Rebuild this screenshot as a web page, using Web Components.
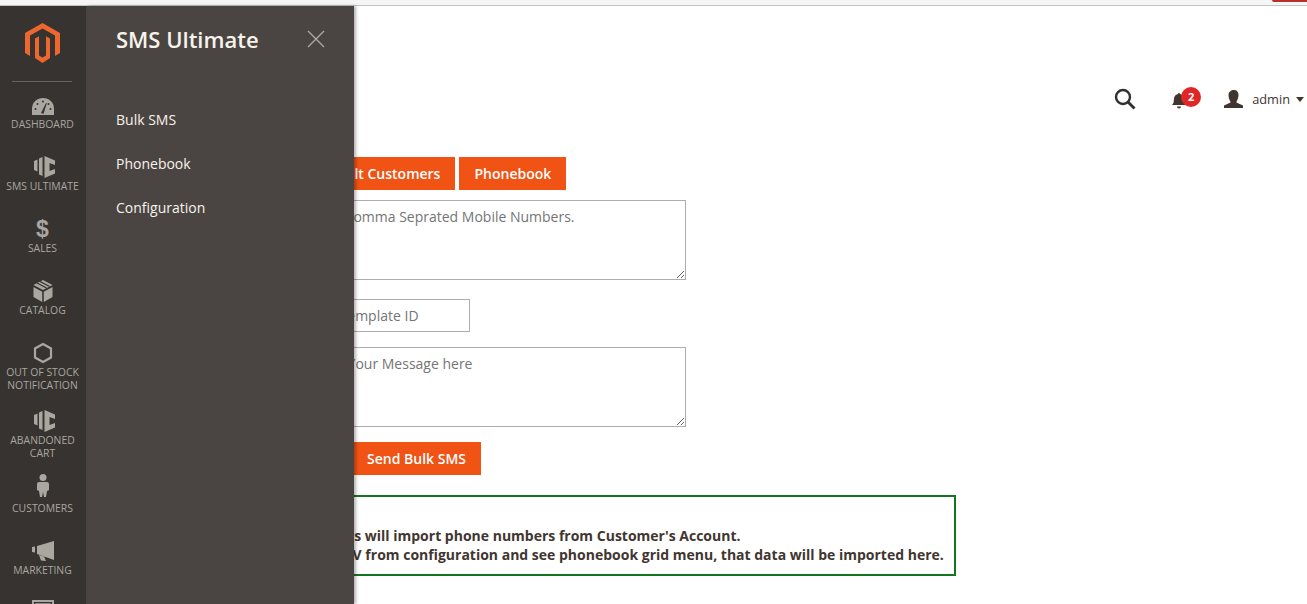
<!DOCTYPE html>
<html>
<head>
<meta charset="utf-8">
<title>SMS Ultimate</title>
<style>
  html, body { margin: 0; height: 100%; overflow: hidden; background: #fff; }
  body { font-family: "Open Sans", "Noto Sans", sans-serif; font-size: 14px; color: #41362f; }
</style>
</head>
<body>
<app-shell>
  <admin-sidebar slot="sidebar">
    <nav-item label="Dashboard">
      <svg viewBox="0 0 30 30" width="30" height="30">
        <path d="M4 27v-6C4 14 9 10 15 10s11 4 11 11v6z" fill="#aaa6a0"/>
        <path d="M13 25l5-10 .8.4-3.4 10.6z" fill="#373330"/>
        <g fill="#373330"><circle cx="7.5" cy="21" r="1"/><circle cx="9.5" cy="16" r="1"/><circle cx="15" cy="13.5" r="1"/><circle cx="20.5" cy="16" r="1"/><circle cx="22.5" cy="21" r="1"/></g>
      </svg>
    </nav-item>
    <nav-item label="SMS Ultimate">
      <svg viewBox="0 0 30 30" width="30" height="30">
        <path d="M6 11l3.500-1.500v12L6 20zM11 8.500l3.500-1.500v19L11 24.500zM16.500 6L27 10.500V15l-5.500-2v8l5.500-2v4.500L16.500 28z" fill="#aaa6a0"/>
      </svg>
    </nav-item>
    <nav-item label="Sales"><span class="glyph" slot="glyph">$</span></nav-item>
    <nav-item label="Catalog">
      <svg viewBox="0 0 30 30" width="30" height="30" fill="#aaa6a0">
        <path d="M15 6l9.5 5-9.500 5-9.500-5z"/>
        <path d="M9 9l9.500 5M12 7.500l9.500 5" stroke="#373330" stroke-width="1.3" fill="none"/>
        <path d="M5.500 13l8.700 4.700V28l-8.700-5zM24.500 13l-8.700 4.700V28l8.700-5z"/>
      </svg>
    </nav-item>
    <nav-item label="Out of Stock Notification" class="two">
      <svg viewBox="0 0 30 30" width="30" height="30">
        <path d="M15 8l8 4.500v9l-8 4.500-8-4.500v-9z" fill="none" stroke="#aaa6a0" stroke-width="2.2"/>
      </svg>
    </nav-item>
    <nav-item label="Abandoned Cart" class="two">
      <svg viewBox="0 0 30 30" width="30" height="30">
        <path d="M6 11l3.500-1.500v12L6 20zM11 8.500l3.500-1.500v19L11 24.500zM16.500 6L27 10.500V15l-5.500-2v8l5.500-2v4.500L16.500 28z" fill="#aaa6a0"/>
      </svg>
    </nav-item>
    <nav-item label="Customers">
      <svg viewBox="0 0 30 30" width="30" height="30" fill="#aaa6a0">
        <circle cx="15" cy="5.500" r="3.500"/>
        <path d="M11 10h8q2 0 2 2v6l-2 1-1 6h-2l-1-5-1 5h-2l-1-6-2-1v-6q0-2 2-2z"/>
      </svg>
    </nav-item>
    <nav-item label="Marketing">
      <svg viewBox="0 0 30 30" width="30" height="30" fill="#aaa6a0">
        <path d="M4 13l3-.5v6l-3-.5zM9 12l17-5v19l-17-6z"/>
        <path d="M11 21l5 1.500 2 4.500-5-.5z"/>
      </svg>
    </nav-item>
    <nav-item>
      <svg viewBox="0 0 30 30" width="30" height="30">
        <rect x="5" y="5" width="20" height="20" fill="none" stroke="#aaa6a0" stroke-width="2"/>
        <rect x="8" y="8" width="14" height="6" fill="none" stroke="#aaa6a0" stroke-width="1.5"/>
      </svg>
    </nav-item>
  </admin-sidebar>
  <slide-panel slot="panel" heading="SMS Ultimate">
    <a href="#">Bulk SMS</a>
    <a href="#">Phonebook</a>
    <a href="#">Configuration</a>
  </slide-panel>
  <top-actions slot="main"></top-actions>
  <bulk-sms-form slot="main"></bulk-sms-form>
  <note-box slot="main">
    <div>Customers will import phone numbers from Customer's Account.</div>
    <div style="margin-left: -2px">Import CSV from configuration and see phonebook grid menu, that data will be imported here.</div>
  </note-box>
</app-shell>

<script>
// top strip + sidebar + main column, the slide panel lies over the main column
customElements.define(
  "app-shell",
  class AppShell extends HTMLElement {
    constructor() {
      super();
      const template = document.createElement("template");
      template.innerHTML = `
        <style>
          :host { display: block; position: relative; height: 604px; overflow: hidden; }
          .strip { height: 5px; background: #f6f6f6; border-bottom: 1px solid #c4c4c4; position: relative; }
          .strip i { position: absolute; right: 0; top: 0; width: 35px; height: 1.5px; background: #b8312f; border-radius: 0 0 0 3px; }
          .row { display: flex; height: 598px; }
          .main { flex: 1; min-width: 0; padding-left: 214px; }
          .over { position: absolute; left: 86px; top: 6px; bottom: 0; }
        </style>
        <div class="strip"><i></i></div>
        <div class="row">
          <slot name="sidebar"></slot>
          <div class="main"><slot name="main"></slot></div>
        </div>
        <div class="over"><slot name="panel"></slot></div>
      `;
      this.attachShadow({ mode: "open" }).appendChild(template.content);
    }
  }
);

customElements.define(
  "admin-sidebar",
  class AdminSidebar extends HTMLElement {
    constructor() {
      super();
      const template = document.createElement("template");
      template.innerHTML = `
        <style>
          :host { display: block; flex: none; box-sizing: border-box; width: 86px; padding-right: 1px; background: #373330; overflow: hidden; }
          .logo { display: block; margin: 17px auto 0; }
          hr { border: 0; height: 1px; background: #67635f; margin: 18px 13px 6px 12px; }
        </style>
        <svg class="logo" viewBox="0 0 35 40" width="35" height="40">
          <path fill="#ee672f" d="M17.5 0L35 10v20l-5 3V12.5L17.5 5.5 5 12.5V33l-5-3V10zM10 15.5l4-2.200v19.200l3.500 2 3.500-2V13.300l4 2.200V35l-7.500 5L10 35z"/>
        </svg>
        <hr>
        <slot></slot>
      `;
      this.attachShadow({ mode: "open" }).appendChild(template.content);
    }
  }
);

customElements.define(
  "nav-item",
  class NavItem extends HTMLElement {
    constructor() {
      super();
      const template = document.createElement("template");
      template.innerHTML = `
        <style>
          :host { display: block; padding-bottom: 19px; text-align: center; }
          :host(.two) { padding-bottom: 12px; }
          .icon { height: 30px; display: flex; justify-content: center; }
          .label { font-size: 10.4px; line-height: 13px; text-transform: uppercase; color: #aaa6a0; }
          ::slotted(.glyph) { font: bold 23px/34px "Liberation Sans", sans-serif; color: #aaa6a0; }
        </style>
        <div class="icon"><slot></slot><slot name="glyph"></slot></div>
        <div class="label"></div>
      `;
      const shadowRoot = this.attachShadow({ mode: "open" });
      shadowRoot.appendChild(template.content);
      shadowRoot.querySelector(".label").textContent = this.getAttribute("label");
    }
  }
);

customElements.define(
  "slide-panel",
  class SlidePanel extends HTMLElement {
    constructor() {
      super();
      const template = document.createElement("template");
      template.innerHTML = `
        <style>
          :host { display: block; box-sizing: border-box; width: 268px; height: 100%; padding: 0 30px; background: #4a4542; box-shadow: 2px 0 3px rgba(0,0,0,.3); }
          .head { display: flex; justify-content: space-between; align-items: center; height: 66px; margin-bottom: 26px; }
          h2 { margin: 0; font-size: 22px; font-weight: 600; color: #f7f3eb; }
          svg { margin-right: -1px; margin-top: -1px; }
          .links { display: flex; flex-direction: column; }
          ::slotted(a) { color: #f7f3eb; text-decoration: none; font-size: 14px; line-height: 44px; }
        </style>
        <div class="head">
          <h2></h2>
          <svg viewBox="0 0 18 18" width="18" height="18"><path d="M1 1l16 16M17 1L1 17" stroke="#adaaa6" stroke-width="1.3" fill="none"/></svg>
        </div>
        <div class="links"><slot></slot></div>
      `;
      const shadowRoot = this.attachShadow({ mode: "open" });
      shadowRoot.appendChild(template.content);
      shadowRoot.querySelector("h2").textContent = this.getAttribute("heading");
    }
  }
);

customElements.define(
  "top-actions",
  class TopActions extends HTMLElement {
    constructor() {
      super();
      const template = document.createElement("template");
      template.innerHTML = `
        <style>
          :host { display: flex; align-items: flex-start; justify-content: flex-end; height: 151px; box-sizing: border-box; padding: 81px 3px 0 0; }
          .wrap { display: flex; align-items: center; height: 24px; }
          .bell { position: relative; margin-left: 35px; width: 16px; height: 20px; top: 1px; }
          .badge { position: absolute; left: 10px; top: -3px; width: 20px; height: 20px; border-radius: 50%; background: #e22626; color: #fff; font-size: 11px; font-weight: 700; line-height: 20px; text-align: center; }
          .user { margin-left: 37px; }
          .name { margin-left: 8px; font-size: 12.8px; color: #41362f; }
          .caret { margin-left: 6px; width: 0; height: 0; border: 4px solid transparent; border-top: 5px solid #41362f; border-bottom: 0; }
        </style>
        <div class="wrap">
          <svg viewBox="0 0 22 22" width="22" height="22"><circle cx="9" cy="9" r="7" fill="none" stroke="#303030" stroke-width="2.4"/><path d="M14 14l6.500 6.500" stroke="#303030" stroke-width="2.8"/></svg>
          <div class="bell">
            <svg viewBox="0 0 16 20" width="16" height="20"><path d="M1 15q2-2 2-6 0-4 4-5 0-1 1-1t1 1q4 1 4 5 0 4 2 6zM6 16.500h4q0 2-2 2t-2-2z" fill="#41362f"/></svg>
            <div class="badge">2</div>
          </div>
          <svg class="user" viewBox="0 0 20 18" width="20" height="18"><path d="M10 0c3 0 4.500 2 4.500 5s-1.500 6-2 6.500v1l6.500 3v2.500H0v-2.500l6.500-3v-1C6 11 4.500 8 4.500 5S7 0 10 0z" fill="#41362f"/></svg>
          <span class="name">admin</span>
          <div class="caret"></div>
        </div>
      `;
      this.attachShadow({ mode: "open" }).appendChild(template.content);
    }
  }
);

customElements.define(
  "bulk-sms-form",
  class BulkSmsForm extends HTMLElement {
    constructor() {
      super();
      const template = document.createElement("template");
      template.innerHTML = `
        <style>
          :host { display: block; font-size: 14px; }
          .tabs { display: flex; gap: 4px; margin: 0 0 10px -1px; }
          button { display: block; font: 600 14px/33px "Open Sans", sans-serif; height: 33px; padding: 0 15px; border: 0; border-radius: 0; background: #f05314; color: #fff; }
          textarea, input { display: block; box-sizing: border-box; margin: 0; border: 1px solid #adadad; border-radius: 0; font: 14px "Open Sans", sans-serif; color: #41362f; outline: none; }
          textarea { width: 386px; height: 80px; padding: 6px 8px; }
          textarea.numbers { padding-left: 5px; }
          input { width: 170px; height: 33px; padding: 0; margin-top: 19px; margin-bottom: 15px; }
          .send { margin: 15px 0 20px 52px; }
          ::placeholder { color: #757575; opacity: 1; }
        </style>
        <div class="tabs">
          <button>Default Customers</button>
          <button>Phonebook</button>
        </div>
        <textarea class="numbers" placeholder="Enter Comma Seprated Mobile Numbers."></textarea>
        <input type="text" placeholder="Enter Template ID">
        <textarea placeholder="Enter Your Message here"></textarea>
        <button class="send">Send Bulk SMS</button>
      `;
      this.attachShadow({ mode: "open" }).appendChild(template.content);
    }
  }
);

customElements.define(
  "note-box",
  class NoteBox extends HTMLElement {
    constructor() {
      super();
      const template = document.createElement("template");
      template.innerHTML = `
        <style>
          :host { display: block; box-sizing: border-box; width: 682px; height: 81px; margin-left: -26px; border: 2px solid #12761f; padding: 29px 4px 0 10px; font-size: 14px; font-weight: 700; line-height: 19px; color: #41362f; }
        </style>
        <slot></slot>
      `;
      this.attachShadow({ mode: "open" }).appendChild(template.content);
    }
  }
);
</script>
</body>
</html>
